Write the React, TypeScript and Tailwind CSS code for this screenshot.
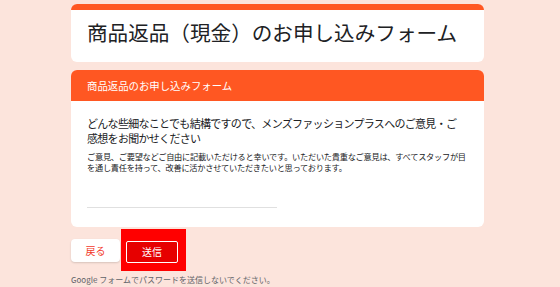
import React from 'react'

const font = { fontFamily: '"Noto Sans CJK JP", "Noto Sans", sans-serif' }

export default function App() {
  return (
    <div
      className="w-[560px] h-[287px] overflow-hidden bg-[#fce4dc] pt-[4px] pl-[71px]"
      style={font}
    >
      <div className="w-[413px] flex flex-col">
        {/* title card */}
        <div className="rounded-[6px] overflow-hidden bg-white">
          <div className="h-[6px] bg-[#ff5722]" />
          <div className="h-[52px] pt-[10px] pl-[16px]">
            <h1 className="text-[20.6px] leading-[24px] text-[#202124] whitespace-nowrap">
              商品返品（現金）のお申し込みフォーム
            </h1>
          </div>
        </div>

        {/* section card */}
        <div className="mt-[8px] h-[157px] rounded-[6px] overflow-hidden bg-white flex flex-col">
          <div className="h-[31px] bg-[#ff5722] flex items-center pl-[16px]">
            <span className="text-[10.4px] leading-[12px] text-white whitespace-nowrap">
              商品返品のお申し込みフォーム
            </span>
          </div>
          <div className="px-[16px] pt-[15px]">
            <p className="text-[11px] tracking-[-0.7px] leading-[15px] text-[#202124] whitespace-nowrap">
              どんな些細なことでも結構ですので、メンズファッションプラスへのご意見・ご
              <br />
              感想をお聞かせください
            </p>
            <p className="mt-[5px] text-[8.2px] tracking-[-0.25px] leading-[11px] text-[#202124] whitespace-nowrap">
              ご意見、ご要望などご自由に記載いただけると幸いです。いただいた貴重なご意見は、すべてスタッフが目
              <br />
              を通し責任を持って、改善に活かさせていただきたいと思っております。
            </p>
            <div className="mt-[34px] w-[190px] h-px bg-[#e0e0e0]" />
          </div>
        </div>

        {/* buttons */}
        <div className="mt-[2px] flex items-center">
          <button className="w-[49px] h-[23px] rounded-[4px] bg-white shadow-[0_1px_2px_rgba(0,0,0,0.15)] text-[10px] text-[#f23b2c]">
            戻る
          </button>
          <div className="ml-px bg-[#ff0000] pl-[5px] pr-[8px] pt-[8px] pb-[8px]">
            <button className="w-[52px] h-[22px] rounded-[2px] border border-white bg-[#e60000] text-[10px] leading-none text-white">
              送信
            </button>
          </div>
        </div>

        <p className="mt-[4px] text-[8px] leading-[10px] text-[#5f6368] whitespace-nowrap">
          Google フォームでパスワードを送信しないでください。
        </p>
      </div>
    </div>
  )
}
